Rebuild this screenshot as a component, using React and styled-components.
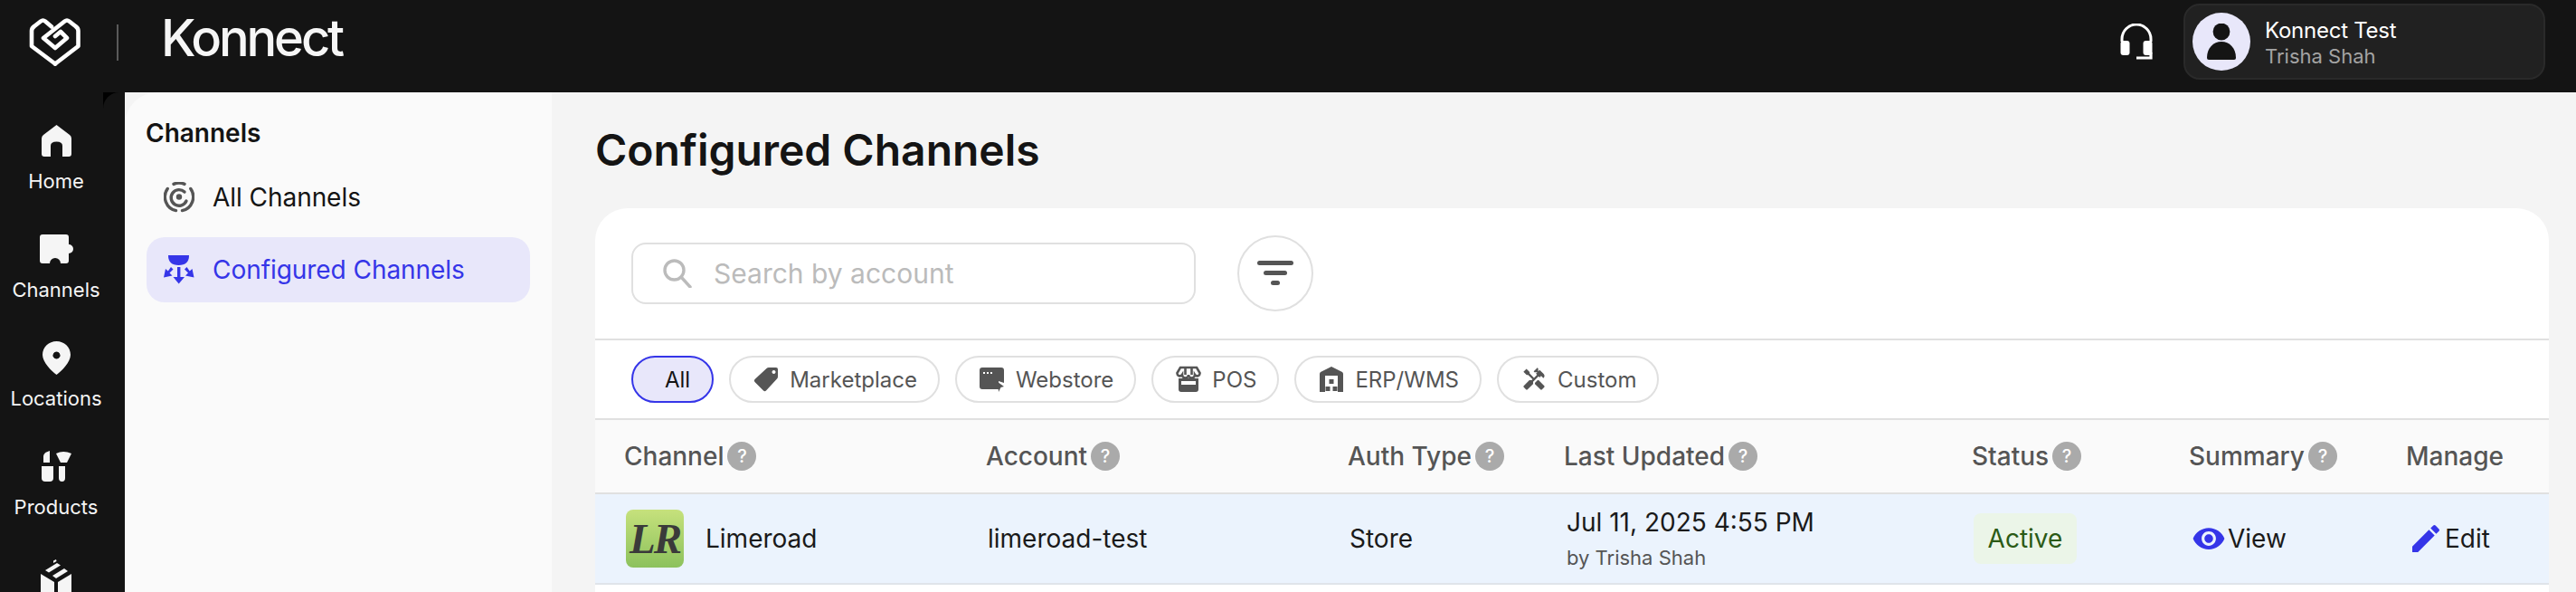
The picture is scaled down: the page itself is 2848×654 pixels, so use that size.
import React from "react";
import styled, { createGlobalStyle } from "styled-components";
import { MdHandyman, MdVisibility, MdEdit } from "react-icons/md";

const Global = createGlobalStyle`
  html, body { margin: 0; padding: 0; height: 654px; overflow: hidden; background: #f4f4f4; }
  * { box-sizing: border-box; }
  body { font-family: Inter, "Liberation Sans", sans-serif; color: #141414; }
`;

const Page = styled.div`
  width: 2848px; height: 654px; overflow: hidden; display: flex; flex-direction: column;
  position: relative; background: #f4f4f4;
`;
const TopBar = styled.header`
  flex: 0 0 102px; background: #141414; display: flex; align-items: center; padding: 0 34px 0 32px;
`;
const Brand = styled.div`display: flex; align-items: center; margin-bottom: 9px;`;
const LogoMark = styled.svg`flex: none; display: block;`;
const BarDivider = styled.div`width: 2px; height: 40px; background: #5a5a5a; margin: 0 47px 0 39px;`;
const Wordmark = styled.div`
  color: #f6f6f6; font-size: 56px; font-weight: 500; letter-spacing: -3.1px; line-height: 1; margin-top: -9px;
`;
const Spacer = styled.div`flex: 1;`;
const Headset = styled.svg`display: block; margin-right: 34px; margin-bottom: 10px;`;
const UserBox = styled.div`
  width: 400px; height: 84px; margin-top: -10px; display: flex; align-items: center; gap: 16px; padding: 0 8px;
  background: #212121; border: 2px solid #2a2a2a; border-radius: 18px;
`;
const Avatar = styled.div`
  width: 64px; height: 64px; border-radius: 50%; background: #e8e7fa; display: flex; align-items: center; justify-content: center;
`;
const UserText = styled.div`padding-top: 3px;`;
const UserName = styled.div`color: #fff; font-size: 24px; line-height: 28px; font-weight: 400; letter-spacing: -0.25px;`;
const UserSub = styled.div`color: #a3a3a3; font-size: 22px; line-height: 28px;`;

const Body = styled.div`flex: 1; display: flex; min-height: 0;`;
const Rail = styled.nav`
  flex: 0 0 138px; background: #141414; display: flex; flex-direction: column; align-items: center;
  padding: 36px 14px 0 0; position: relative; overflow: hidden;
`;
const Wedge = styled.div`
  position: absolute; left: 114px; top: 0; width: 20px; height: 18px; background: #000;
  &::after { content: ""; position: absolute; inset: 0; background: #141414; border-top-left-radius: 18px; }
`;
const RailItem = styled.div`
  flex: 0 0 120px; width: 124px; display: flex; flex-direction: column; align-items: center; color: #f5f5f5;
`;
const RailIcon = styled.div`height: 44px; margin-top: -5px; display: flex; align-items: center; justify-content: center;`;
const RailLabel = styled.div`font-size: 22px; line-height: 28px; margin-top: 9px;`;

const SubNav = styled.aside`
  flex: 0 0 472px; background: #fafafa; border-top-left-radius: 36px; padding: 29px 24px 0 24px;
`;
const SubTitle = styled.div`font-size: 28px; font-weight: 600; line-height: 32px; margin-bottom: 19px; margin-left: -1px;`;
const SubItem = styled.div`
  height: 72px; display: flex; align-items: center; gap: 20px; padding-left: 19px; border-radius: 20px; font-size: 28px;
  margin-bottom: 8px; letter-spacing: -0.05px;
  background: ${(p) => (p.$active ? "#e8e7fa" : "transparent")};
  color: ${(p) => (p.$active ? "#3535e8" : "#141414")};
`;

const Main = styled.main`flex: 1; min-width: 0; padding: 35px 30px 0 48px;`;
const Title = styled.h1`margin: 0 0 35px; font-size: 48px; line-height: 58px; font-weight: 600; color: #141414;`;
const Card = styled.section`background: #fff; border-radius: 36px 36px 0 0; height: 424px;`;
const SearchRow = styled.div`
  height: 146px; display: flex; align-items: center; gap: 46px; padding: 0 40px; border-bottom: 2px solid #e0e0e0;
`;
const SearchBox = styled.div`
  width: 624px; height: 68px; display: flex; align-items: center; gap: 24px; padding-left: 33px;
  border: 2px solid #e0e0e0; border-radius: 16px; background: #fff;
`;
const Placeholder = styled.span`font-size: 30px; color: #bbb;`;
const FilterButton = styled.div`
  width: 84px; height: 84px; border-radius: 50%; border: 2px solid #e0e0e0; display: flex; align-items: center; justify-content: center;
`;
const ChipRow = styled.div`height: 88px; display: flex; align-items: center; gap: 17px; padding-left: 40px; border-bottom: 2px solid #e0e0e0;`;
const Chip = styled.div`
  height: 52px; display: flex; align-items: center; gap: 12px; padding: ${(p) => (p.$active ? "0 24px 0 35px" : "0 23px 0 25px")};
  border-radius: 26px; font-size: 24px;
  border: 2px solid ${(p) => (p.$active ? "#3535e8" : "#e0e0e0")};
  background: ${(p) => (p.$active ? "#e8e7fa" : "#fff")};
  color: ${(p) => (p.$active ? "#141414" : "#555")};
`;
const columns = "400px 400px 239px 451px 240px 240px 1fr";
const HeadRow = styled.div`
  height: 82px; display: grid; grid-template-columns: ${columns}; align-items: center; padding-left: 32px;
  background: #fafafa; border-bottom: 2px solid #e0e0e0; color: #555; font-size: 28px; font-weight: 500;
`;
const HeadCell = styled.div`display: flex; align-items: center; gap: 4px;`;
const Help = styled.span`
  width: 32px; height: 32px; border-radius: 50%; background: #aaa; color: #fff; font-size: 20px; font-weight: 500;
  display: inline-flex; align-items: center; justify-content: center;
`;
const DataRow = styled.div`
  height: 100px; display: grid; grid-template-columns: ${columns}; align-items: center; padding-left: 34px;
  background: #ebf3fd; border-bottom: 2px solid #e0e4ea; font-size: 28px; color: #1a1a1a;
`;
const ChannelCell = styled.div`display: flex; align-items: center; gap: 24px;`;
const LrLogo = styled.div`
  width: 64px; height: 64px; border-radius: 8px; background: linear-gradient(#c6e17c, #8cc15c); color: #3a3a3a;
  font-family: "Liberation Serif", serif; font-style: italic; font-weight: 700; font-size: 47px; letter-spacing: -2px;
  display: flex; align-items: center; justify-content: center;
`;
const DateCell = styled.div`margin-left: 1px;`;
const DateMain = styled.div`font-size: 28px; line-height: 34px;`;
const DateSub = styled.div`font-size: 22px; line-height: 28px; color: #555; margin-top: 8px;`;
const StatusBadge = styled.div`
  width: 114px; height: 56px; border-radius: 8px; background: #ebf5e8; color: #2b5a16; display: flex; align-items: center; justify-content: center;
`;
const ActionLink = styled.div`display: flex; align-items: center; gap: ${(p) => p.$gap}px; margin-left: ${(p) => p.$indent || 0}px; color: #1a1a1a;`;

const blue = "#3535e8";

const Logo = () => (
  <LogoMark width="58" height="55" viewBox="12 9 58 55" fill="none" stroke="#fff" strokeWidth="4.6" strokeLinejoin="round" strokeLinecap="round">
    <path d="M41 60.5 L15 41 V24 Q15 21 18 19 L25 13.5 Q27.5 11.5 30 13.5 L37 19.5" />
    <path d="M41 60.5 L66.5 41 V24 Q66.5 21 63.5 19 L56.5 13.5 Q54 11.5 51.5 13.5 L28 32 L41 43 L54 32 L47 25 L41 30" />
  </LogoMark>
);

const Home = () => (
  <svg width="33" height="35" viewBox="0 0 33 35"><path fill="#f5f5f5" d="M16.5 0 L31 11 Q33 12.5 33 15 V32 Q33 35 30 35 H23 V23 Q23 18.5 16.5 18.5 Q10 18.5 10 23 V35 H3 Q0 35 0 32 V15 Q0 12.5 2 11 Z" /></svg>
);
const Puzzle = () => (
  <svg width="37" height="32" viewBox="0 0 37 32"><path fill="#f5f5f5" d="M3 0 H29 Q32 0 32 3 V11 A5 5 0 0 1 32 21 V29 Q32 32 29 32 H23 A6 6 0 0 0 11 32 H3 Q0 32 0 29 V3 Q0 0 3 0 Z" /></svg>
);
const Pin = () => (
  <svg width="31" height="37" viewBox="0 0 31 37"><path fill="#f5f5f5" fillRule="evenodd" d="M15.5 0 C24 0 31 6.5 31 15 C31 23 21 33 15.5 37 C10 33 0 23 0 15 C0 6.5 7 0 15.5 0 Z M15.5 11.5 a4 4 0 1 0 0.01 0 Z" /></svg>
);
const Beauty = () => (
  <svg width="33" height="34" viewBox="0 0 33 34" fill="#f5f5f5">
    <path d="M2 13 V6 Q2 2 9 0 V13 Z" />
    <path d="M0 17 H13 V30 Q13 34 9 34 H4 Q0 34 0 30 Z" />
    <path d="M16 3 Q24 -1 33 3 L28 13 H21 Z" />
    <path d="M19 17 H26 V30 Q26 34 22.5 34 Q19 34 19 30 Z" />
  </svg>
);
const Box = () => (
  <svg width="34" height="54" viewBox="0 -10 34 54" fill="#f5f5f5">
    <path d="M0 16 L15 25 V44 L0 36 Z" />
    <path d="M34 16 L19 25 V44 L34 36 Z" />
    <path d="M5 12 L18 4 L22 6.5 L9 14.5 Z" />
    <path d="M13 18 L26 10 L30 13 L17 21 Z" />
    <path d="M14 1.5 L17 0 L17.5 2 L14 4 Z" />
  </svg>
);

const Target = () => (
  <svg width="34" height="34" viewBox="0 0 34 34" fill="none" stroke="#555" strokeWidth="3.4" strokeLinecap="round">
    <path d="M11 2.4 A15.5 15.5 0 0 1 23 2.4" />
    <path d="M29.8 7.5 A15.5 15.5 0 0 1 20.5 31.6" />
    <path d="M4.2 7.5 A15.5 15.5 0 0 0 13.5 31.6" />
    <path d="M23 11 A8.8 8.8 0 1 0 25 21" />
    <circle cx="17" cy="16.5" r="3.2" fill="#555" stroke="none" />
  </svg>
);
const Split = () => (
  <svg width="34" height="32" viewBox="0 0 34 32" fill={blue}>
    <path d="M5 0 H28 Q28 11 16.5 11 Q5 11 5 0 Z" />
    <path d="M15 13 H18.4 V24 H23 L16.7 31.5 L10.5 24 H15 Z" />
    <path d="M8 13 L10.5 15.5 L6.5 19.5 L9.5 22.5 L0 24.5 L2 15 L4.8 17.6 Z" />
    <path d="M25.5 13 L23 15.5 L27 19.5 L24 22.5 L33.5 24.5 L31.5 15 L28.7 17.6 Z" />
  </svg>
);

const Headphones = () => (
  <Headset width="36" height="40" viewBox="0 0 36 40" fill="none">
    <path d="M2 20 V17 A16 16 0 0 1 34 17 V20" stroke="#fff" strokeWidth="3" />
    <rect x="0.5" y="19" width="10" height="16" rx="3" fill="#fff" />
    <rect x="25.5" y="19" width="10" height="16" rx="3" fill="#fff" />
    <path d="M34 32 V38 H18" stroke="#fff" strokeWidth="3.2" />
  </Headset>
);
const Person = () => (
  <svg width="32" height="40" viewBox="0 0 32 40" fill="#141414">
    <circle cx="16" cy="9" r="9.4" />
    <path d="M0 38 C0 27 7 20 16 20 C25 20 32 27 32 38 Q32 40 30 40 H2 Q0 40 0 38 Z" />
  </svg>
);
const Search = () => (
  <svg width="32" height="32" viewBox="0 0 32 32" fill="none" stroke="#bbb" strokeWidth="3.4">
    <circle cx="12.5" cy="12.5" r="10.5" />
    <path d="M20 20 L30 31" strokeLinecap="round" />
  </svg>
);
const Filter = () => (
  <svg width="40" height="28" viewBox="0 0 40 28" fill="#555">
    <rect x="0" y="0" width="40" height="5" rx="2.5" />
    <rect x="7" y="11" width="26" height="5" rx="2.5" />
    <rect x="15" y="22" width="10" height="5" rx="2.5" />
  </svg>
);
const Tag = () => (
  <svg width="28" height="28" viewBox="0 0 28 28"><path fill="#555" fillRule="evenodd" d="M17 1 H25 Q27 1 27 3 V11 Q27 12.5 26 13.5 L14 26.5 Q12.5 28 11 26.5 L1.5 17 Q0 15.5 1.5 14 L14.5 2 Q15.5 1 17 1 Z M22.5 4 a2 2 0 1 0 .01 0 Z" /></svg>
);
const Web = () => (
  <svg width="28" height="28" viewBox="0 0 28 28">
    <path fill="#555" fillRule="evenodd" d="M3 1 H24 Q27 1 27 4 V18 L21 16 L21.5 25 H3 Q0 25 0 22 V4 Q0 1 3 1 Z M4 6 h2 v2 h-2 Z M8 6 h2 v2 h-2 Z M12 6 h2 v2 h-2 Z" />
    <path fill="#555" d="M20 17 L27 22 L23.5 23 L21 28 Z" />
  </svg>
);
const Store = () => (
  <svg width="28" height="32" viewBox="0 0 28 32">
    <path fill="#555" d="M3 15 H25 V27 Q25 30 22 30 H6 Q3 30 3 27 Z" />
    <rect x="6" y="18" width="16" height="4" fill="#fff" />
    <path fill="none" stroke="#555" strokeWidth="2.6" d="M5 3 H23 L26.5 9 A3 3 0 0 1 21 11 A3.5 3.5 0 0 1 14 11 A3.5 3.5 0 0 1 7 11 A3 3 0 0 1 1.5 9 Z M10.5 3 V11 M17.5 3 V11" />
  </svg>
);
const Warehouse = () => (
  <svg width="28" height="28" viewBox="-1 0 28 28"><path fill="#555" fillRule="evenodd" d="M13 0 L25 6 Q26 7 26 8 V28 H0 V8 Q0 7 1 6 Z M6 10 V28 H20 V10 Z M10.5 14 h5 v5 h-5 Z M6.5 22 h5 v5 h-5 Z M14.5 22 h5 v5 h-5 Z" /></svg>
);

const HeadLabel = ({ children, help = true }) => (
  <HeadCell>{children}{help && <Help>?</Help>}</HeadCell>
);

const railItems = [
  ["Home", <Home />], ["Channels", <Puzzle />], ["Locations", <Pin />], ["Products", <Beauty />],
];

export default function App() {
  return (
    <Page>
      <Global />
      <TopBar>
        <Brand>
          <Logo />
          <BarDivider />
          <Wordmark>Konnect</Wordmark>
        </Brand>
        <Spacer />
        <Headphones />
        <UserBox>
          <Avatar><Person /></Avatar>
          <UserText>
            <UserName>Konnect Test</UserName>
            <UserSub>Trisha Shah</UserSub>
          </UserText>
        </UserBox>
      </TopBar>
      <Body>
        <Rail>
          <Wedge />
          {railItems.map(([label, icon]) => (
            <RailItem key={label}>
              <RailIcon>{icon}</RailIcon>
              <RailLabel>{label}</RailLabel>
            </RailItem>
          ))}
          <RailItem><RailIcon><Box /></RailIcon></RailItem>
        </Rail>
        <SubNav>
          <SubTitle>Channels</SubTitle>
          <SubItem><Target />All Channels</SubItem>
          <SubItem $active><Split />Configured Channels</SubItem>
        </SubNav>
        <Main>
          <Title>Configured Channels</Title>
          <Card>
            <SearchRow>
              <SearchBox><Search /><Placeholder>Search by account</Placeholder></SearchBox>
              <FilterButton><Filter /></FilterButton>
            </SearchRow>
            <ChipRow>
              <Chip $active>All</Chip>
              <Chip><Tag />Marketplace</Chip>
              <Chip><Web />Webstore</Chip>
              <Chip><Store />POS</Chip>
              <Chip><Warehouse />ERP/WMS</Chip>
              <Chip><MdHandyman size={28} color="#555" />Custom</Chip>
            </ChipRow>
            <HeadRow>
              <HeadLabel>Channel</HeadLabel>
              <HeadLabel>Account</HeadLabel>
              <HeadLabel>Auth Type</HeadLabel>
              <HeadLabel>Last Updated</HeadLabel>
              <HeadLabel>Status</HeadLabel>
              <HeadLabel>Summary</HeadLabel>
              <HeadLabel help={false}>Manage</HeadLabel>
            </HeadRow>
            <DataRow>
              <ChannelCell><LrLogo>LR</LrLogo>Limeroad</ChannelCell>
              <div>limeroad-test</div>
              <div>Store</div>
              <DateCell>
                <DateMain>Jul 11, 2025 4:55 PM</DateMain>
                <DateSub>by Trisha Shah</DateSub>
              </DateCell>
              <div><StatusBadge>Active</StatusBadge></div>
              <ActionLink $indent={1} $gap={2}><MdVisibility size={38} color={blue} />View</ActionLink>
              <ActionLink $gap={1}><MdEdit size={40} color={blue} />Edit</ActionLink>
            </DataRow>
          </Card>
        </Main>
      </Body>
    </Page>
  );
}
